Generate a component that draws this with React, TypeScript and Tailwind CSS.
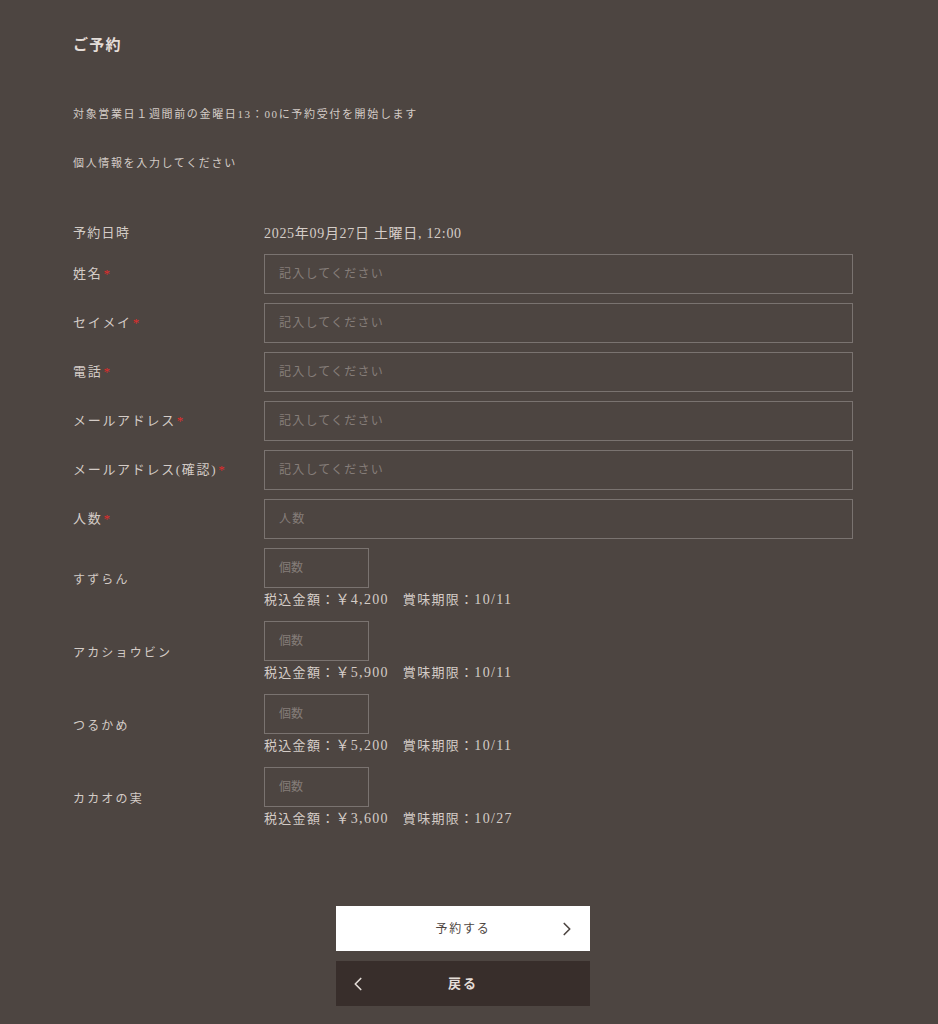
import { ChevronLeft, ChevronRight } from 'lucide-react'

const FIELDS = [
  { label: '姓名', placeholder: '記入してください' },
  { label: 'セイメイ', placeholder: '記入してください' },
  { label: '電話', placeholder: '記入してください' },
  { label: 'メールアドレス', placeholder: '記入してください' },
  { label: 'メールアドレス(確認)', placeholder: '記入してください' },
  { label: '人数', placeholder: '人数' },
]

const ITEMS = [
  { name: 'すずらん', price: '￥4,200', limit: '10/11' },
  { name: 'アカショウビン', price: '￥5,900', limit: '10/11' },
  { name: 'つるかめ', price: '￥5,200', limit: '10/11' },
  { name: 'カカオの実', price: '￥3,600', limit: '10/27' },
]

const font = "font-['Liberation_Serif','Noto_Sans_CJK_JP',serif]"

export default function App() {
  return (
    <div className={`min-h-[1024px] bg-[#4d4541] text-[#d4ccc7] ${font}`}>
      <div className="ml-[73px] w-[780px] pt-[35px]">
        <h1 className="text-[15px] font-bold leading-[20px] tracking-[0.08em] text-[#e4ddd8]">ご予約</h1>

        <p className="mt-[50px] text-[11px] leading-[18px] tracking-[0.15em]">
          対象営業日１週間前の金曜日13：00に予約受付を開始します
        </p>
        <p className="mt-[31px] text-[11px] leading-[18px] tracking-[0.15em]">個人情報を入力してください</p>

        <div className="mt-[50px]">
          <div className="flex h-[22px] items-center text-[13px] tracking-[0.1em]">
            <div className="w-[191px] shrink-0">予約日時</div>
            <div className="text-[14px] tracking-[0.05em]">2025年09月27日 土曜日, 12:00</div>
          </div>

          <div className="mt-[10px] flex flex-col gap-[9px]">
            {FIELDS.map((f) => (
              <div key={f.label} className="flex items-center">
                <div className="w-[191px] shrink-0 text-[13px] tracking-[0.13em]">
                  {f.label}
                  <span className="ml-[1px] text-[#e02b2b]">*</span>
                </div>
                <input
                  placeholder={f.placeholder}
                  className="h-[40px] flex-1 border border-[#7a7370] bg-transparent px-[14px] text-[12px] tracking-[0.1em] text-[#d4ccc7] outline-none placeholder:text-[#857d79]"
                />
              </div>
            ))}
          </div>

          <div className="mt-[9px] flex flex-col gap-[10px]">
            {ITEMS.map((it) => (
              <div key={it.name} className="flex items-center">
                <div className="w-[191px] shrink-0 text-[12px] tracking-[0.18em]">{it.name}</div>
                <div>
                  <input
                    placeholder="個数"
                    className="block h-[40px] w-[105px] border border-[#7a7370] bg-transparent px-[14px] text-[12px] text-[#d4ccc7] outline-none placeholder:text-[#857d79]"
                  />
                  <div className="mt-[1px] text-[13px] leading-[22px] tracking-[0.1em]">
                    税込金額：<span className="text-[14px]">{it.price}</span>
                    <span className="ml-[14px]">
                      賞味期限：<span className="text-[14px]">{it.limit}</span>
                    </span>
                  </div>
                </div>
              </div>
            ))}
          </div>
        </div>
      </div>

      <div className="ml-[336px] mt-[76px] flex w-[254px] flex-col gap-[10px] pb-[19px]">
        <button className="relative flex h-[45px] w-[254px] items-center justify-center bg-white text-[12px] tracking-[0.15em] text-[#4d4541]">
          予約する
          <ChevronRight size={22} strokeWidth={1.8} className="absolute right-[12px] text-[#4d4541]" />
        </button>
        <button className="relative flex h-[45px] w-[254px] items-center justify-center bg-[#382e2b] text-[13px] font-bold tracking-[0.15em] text-[#e4ddd8]">
          <ChevronLeft size={22} strokeWidth={1.8} className="absolute left-[11px]" />
          戻る
        </button>
      </div>
    </div>
  )
}
